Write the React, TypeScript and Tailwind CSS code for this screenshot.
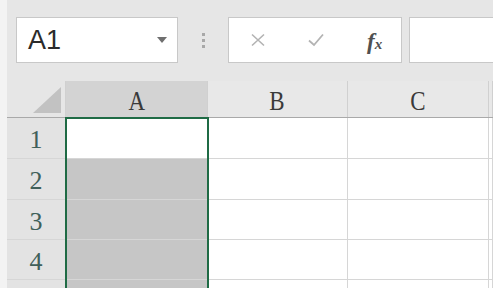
import React from 'react';

const cols = ['A', 'B', 'C', ''];
const colW = ['w-[142px]', 'w-[140px]', 'w-[141px]', 'flex-1'];
const rows = [1, 2, 3, 4, 5];
const rowH = ['h-[41px]', 'h-[41px]', 'h-[40px]', 'h-[40px]', 'h-[40px]'];

const App = () => {
  return (
    <div className="w-[493px] h-[288px] overflow-hidden flex bg-[#f3f3f3]">
      <div className="w-[7px] shrink-0 bg-[#f3f3f3]" />
      <div className="flex-1 flex flex-col bg-[#e6e6e6] min-w-0">
        {/* formula bar */}
        <div className="h-[81px] shrink-0 flex items-start pt-[17px]">
          <div className="ml-[9px] w-[162px] h-[46px] bg-white border border-[#c8c8c8] flex items-center pl-[11px] pr-[10px]">
            <span className="text-[27px] leading-none text-[#2b2b2b] font-['Liberation_Sans',sans-serif]">A1</span>
            <span className="ml-auto w-0 h-0 border-l-[5px] border-r-[5px] border-t-[6px] border-l-transparent border-r-transparent border-t-[#6f6f6f]" />
          </div>
          <div className="w-[50px] h-[46px] flex flex-col items-center justify-center gap-[3px]">
            <span className="w-[3px] h-[3px] bg-[#a8a8a8]" />
            <span className="w-[3px] h-[3px] bg-[#a8a8a8]" />
            <span className="w-[3px] h-[3px] bg-[#a8a8a8]" />
          </div>
          <div className="w-[174px] h-[46px] bg-white border border-[#c8c8c8] flex items-center pl-[20px]">
            <svg width="18" height="14" viewBox="0 0 18 14" className="mr-[40px]">
              <path d="M3 1.5 L15 12.5 M15 1.5 L3 12.5" stroke="#b3b3b3" strokeWidth="1.6" fill="none" />
            </svg>
            <svg width="18" height="14" viewBox="0 0 18 14" className="mr-[42px]">
              <path d="M2 7.5 L7 12 L16 1.5" stroke="#b3b3b3" strokeWidth="1.8" fill="none" />
            </svg>
            <span className="font-['Liberation_Serif',serif] italic font-bold text-[#505050] text-[23px] leading-none pt-[2px]">
              f<span className="text-[15px]">x</span>
            </span>
          </div>
          <div className="ml-[7px] flex-1 h-[46px] bg-white border border-[#c8c8c8] border-r-0" />
        </div>

        {/* grid */}
        <div className="relative flex-1 flex flex-col font-['Liberation_Serif',serif]">
          <div className="h-[37px] shrink-0 flex border-b border-[#a9a9a9]">
            <div className="w-[59px] shrink-0 relative bg-[#e6e6e6] border-r border-[#d0d0d0]">
              <svg width="28" height="26" viewBox="0 0 28 26" className="absolute right-[4px] bottom-[4px]">
                <polygon points="28,0 28,26 0,26" fill="#c2c2c2" />
              </svg>
            </div>
            {cols.map((c, i) => (
              <div
                key={i}
                className={`${colW[i]} shrink-0 flex items-center justify-center pt-[5px] border-r border-[#d0d0d0] text-[27px] leading-none text-[#3a3a3a] ${c === 'A' ? 'bg-[#d3d3d3] text-[#2d4a40]' : 'bg-[#e8e8e8]'}`}
              >
                <span className="inline-block scale-x-[0.85]">{c}</span>
              </div>
            ))}
          </div>
          {rows.map((r, ri) => (
            <div key={r} className={`${rowH[ri]} shrink-0 flex border-b border-[#d6d6d6]`}>
              <div className="w-[59px] shrink-0 flex items-center justify-center pt-[4px] bg-[#e3e3e3] border-r border-[#cfcfcf] text-[26px] leading-none text-[#40605a]">
                {r < 5 ? r : ''}
              </div>
              {cols.map((c, i) => (
                <div
                  key={i}
                  className={`${colW[i]} shrink-0 border-r border-[#d6d6d6] ${c === 'A' && r > 1 ? 'bg-[#c6c6c6]' : 'bg-white'}`}
                />
              ))}
            </div>
          ))}
          {/* selection box */}
          <div className="absolute left-[58px] top-[36px] w-[144px] h-[300px] border-2 border-[#1f6b45] pointer-events-none" />
        </div>
      </div>
    </div>
  );
};

export default App;
